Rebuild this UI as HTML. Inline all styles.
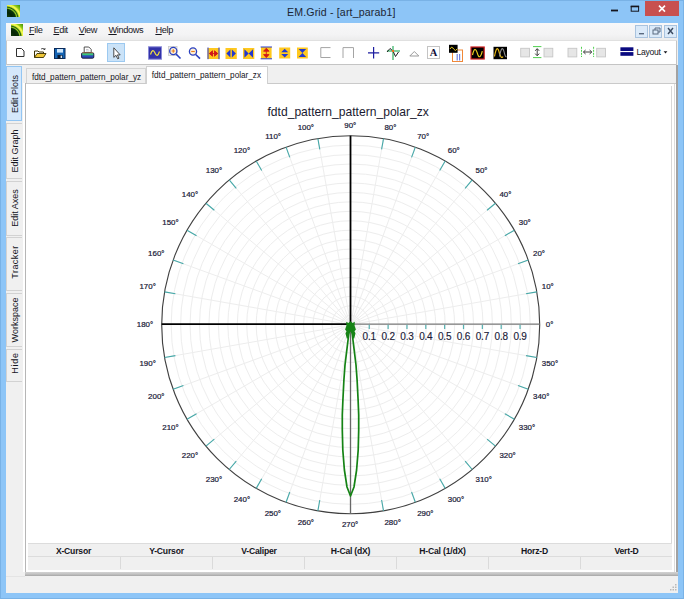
<!DOCTYPE html>
<html><head><meta charset="utf-8"><title>EM.Grid - [art_parab1]</title>
<style>
html,body{margin:0;padding:0;}
body{width:684px;height:599px;overflow:hidden;background:#8dc5f7;font-family:"Liberation Sans",sans-serif;position:relative;}
.abs{position:absolute;}
#win{position:absolute;left:0;top:0;width:684px;height:599px;background:#8dc5f7;box-sizing:border-box;border:1px solid #79b2e6;}
#title{position:absolute;left:287px;top:5.5px;white-space:nowrap;font-size:10.6px;line-height:13px;color:#1c2634;letter-spacing:0.15px;}
#close{position:absolute;left:645px;top:1px;width:34px;height:15px;background:#c8504f;}
#client{position:absolute;left:6px;top:23px;width:672px;height:570px;background:#f0f0f0;}
#menubar{position:absolute;left:6px;top:23px;width:672px;height:17px;background:linear-gradient(#f8f8f9,#f3f3f4 70%,#ececec);}
.menu{position:absolute;top:25px;font-size:9.2px;line-height:11px;color:#15151d;letter-spacing:-0.35px;white-space:nowrap;}
.mdib{position:absolute;top:24.5px;width:12.5px;height:13px;background:#dbeaf9;border:1px solid #a9c3de;box-sizing:border-box;}
#toolbar{position:absolute;left:6px;top:40px;width:670.5px;height:24.5px;background:#fff;border:1px solid #c4c4c4;border-top-color:#e0e0e0;border-left-color:#c8c8c8;border-radius:1px;box-sizing:border-box;}
#sel{position:absolute;left:107.3px;top:43.3px;width:17.5px;height:18.5px;background:#cbe3f8;border:1px solid #9cc9f0;box-sizing:border-box;}
.vtab{position:absolute;left:6.4px;width:16px;background:#f0f0f0;border:1px solid #d2d2d2;border-right:none;box-sizing:border-box;}
.vtab span{position:absolute;left:50%;top:50%;transform:translate(-50%,-50%) rotate(-90deg);white-space:nowrap;font-size:9px;line-height:10px;color:#15151d;margin-left:0.5px;}
.tab{position:absolute;font-size:8.2px;line-height:10px;color:#15151d;box-sizing:border-box;white-space:nowrap;}
#tab1{left:26.3px;top:68px;width:120px;height:15px;background:#f0f0f0;border:1px solid #d4d4d4;border-bottom:none;padding:4.1px 0 0 4.6px;}
#tab2{left:145.6px;top:66px;width:122.4px;height:18px;background:#fff;border:1px solid #d0d0d0;border-bottom:none;padding:3.7px 0 0 5.2px;}
#tbl{position:absolute;left:28px;top:543px;width:644px;height:27px;background:#f0f0f0;border-top:1px solid #dcdcdc;box-sizing:border-box;}
.th{position:absolute;top:545px;height:12px;width:92px;text-align:center;font-size:8.6px;font-weight:bold;color:#15151d;line-height:12px;letter-spacing:-0.2px;}
.cd{position:absolute;top:557px;width:1px;height:12px;background:#dadada;}
svg{position:absolute;left:0;top:0;}
text{font-family:"Liberation Sans",sans-serif;}
</style></head><body>
<div id="win"></div>
<div id="title">EM.Grid - [art_parab1]</div>
<div id="close"></div>
<div id="client"></div>
<div id="menubar"></div>
<div class="menu" style="left:29px"><u>F</u>ile</div>
<div class="menu" style="left:53.4px"><u>E</u>dit</div>
<div class="menu" style="left:78.8px"><u>V</u>iew</div>
<div class="menu" style="left:108.4px"><u>W</u>indows</div>
<div class="menu" style="left:155.4px"><u>H</u>elp</div>
<div class="mdib" style="left:635px"></div>
<div class="mdib" style="left:649.4px"></div>
<div class="mdib" style="left:664px"></div>
<div id="toolbar"></div>
<div id="sel"></div>
<!-- panel frame -->
<div class="abs" style="left:23px;top:82.7px;width:653.4px;height:489.3px;background:#fff"></div>
<div class="abs" style="left:25px;top:83px;width:1.3px;height:491px;background:#b6b6b6"></div>
<div class="abs" style="left:26.3px;top:82.7px;width:650px;height:0.9px;background:#cacaca"></div>
<div class="abs" style="left:673.7px;top:84px;width:1.6px;height:488px;background:#dcdcdc"></div>
<div class="abs" style="left:676.3px;top:65px;width:1.4px;height:510.5px;background:#a2a2a2"></div>
<div class="abs" style="left:24.8px;top:572px;width:653px;height:3.7px;background:linear-gradient(#d2d2d2,#c4c4c4 50%,#a6a6a6)"></div>
<div class="abs" style="left:6px;top:575.7px;width:19px;height:1px;background:#e4e4e4"></div>
<div class="abs" style="left:671px;top:86px;width:1px;height:457px;background:#d8d8d8"></div>
<div class="tab" id="tab1">fdtd_pattern_pattern_polar_yz</div>
<div class="tab" id="tab2">fdtd_pattern_pattern_polar_zx</div>
<div class="vtab" style="top:65.7px;height:55.8px;background:#d5e8fb;border-color:#93c6f3;border-right:1px solid #93c6f3"><span>Edit Plots</span></div>
<div class="vtab" style="top:123px;height:56px;"><span>Edit Graph</span></div>
<div class="vtab" style="top:180.5px;height:55px;"><span>Edit Axes</span></div>
<div class="vtab" style="top:236.6px;height:54px;"><span style="letter-spacing:0.45px;margin-top:-1.5px">Tracker</span></div>
<div class="vtab" style="top:292.6px;height:54.5px;"><span>Workspace</span></div>
<div class="vtab" style="top:349px;height:33px;"><span style="letter-spacing:0.8px;margin-top:-2.5px">Hide</span></div>
<div id="tbl"></div>
<div class="abs" style="left:28px;top:556px;width:644px;height:1px;background:#dcdcdc"></div>
<div class="th" style="left:27.5px">X-Cursor</div>
<div class="th" style="left:120.5px">Y-Cursor</div>
<div class="th" style="left:213px">V-Caliper</div>
<div class="th" style="left:304.5px">H-Cal (dX)</div>
<div class="th" style="left:396.5px">H-Cal (1/dX)</div>
<div class="th" style="left:488.5px">Horz-D</div>
<div class="th" style="left:580.5px">Vert-D</div>
<div class="cd" style="left:119.5px"></div><div class="cd" style="left:211.6px"></div><div class="cd" style="left:303.8px"></div><div class="cd" style="left:396px"></div><div class="cd" style="left:488px"></div><div class="cd" style="left:580px"></div>
<svg width="684" height="599" viewBox="0 0 684 599">
<circle cx="350.7" cy="324.7" r="9.45" fill="none" stroke="#ededed" stroke-width="1"/>
<circle cx="350.7" cy="324.7" r="18.90" fill="none" stroke="#ededed" stroke-width="1"/>
<circle cx="350.7" cy="324.7" r="28.35" fill="none" stroke="#ededed" stroke-width="1"/>
<circle cx="350.7" cy="324.7" r="37.80" fill="none" stroke="#ededed" stroke-width="1"/>
<circle cx="350.7" cy="324.7" r="47.25" fill="none" stroke="#ededed" stroke-width="1"/>
<circle cx="350.7" cy="324.7" r="56.70" fill="none" stroke="#ededed" stroke-width="1"/>
<circle cx="350.7" cy="324.7" r="66.15" fill="none" stroke="#ededed" stroke-width="1"/>
<circle cx="350.7" cy="324.7" r="75.60" fill="none" stroke="#ededed" stroke-width="1"/>
<circle cx="350.7" cy="324.7" r="85.05" fill="none" stroke="#ededed" stroke-width="1"/>
<circle cx="350.7" cy="324.7" r="94.50" fill="none" stroke="#ededed" stroke-width="1"/>
<circle cx="350.7" cy="324.7" r="103.95" fill="none" stroke="#ededed" stroke-width="1"/>
<circle cx="350.7" cy="324.7" r="113.40" fill="none" stroke="#ededed" stroke-width="1"/>
<circle cx="350.7" cy="324.7" r="122.85" fill="none" stroke="#ededed" stroke-width="1"/>
<circle cx="350.7" cy="324.7" r="132.30" fill="none" stroke="#ededed" stroke-width="1"/>
<circle cx="350.7" cy="324.7" r="141.75" fill="none" stroke="#ededed" stroke-width="1"/>
<circle cx="350.7" cy="324.7" r="151.20" fill="none" stroke="#ededed" stroke-width="1"/>
<circle cx="350.7" cy="324.7" r="160.65" fill="none" stroke="#ededed" stroke-width="1"/>
<circle cx="350.7" cy="324.7" r="170.10" fill="none" stroke="#ededed" stroke-width="1"/>
<circle cx="350.7" cy="324.7" r="179.55" fill="none" stroke="#ededed" stroke-width="1"/>
<line x1="350.7" y1="324.7" x2="539.70" y2="324.70" stroke="#ededed" stroke-width="1"/>
<line x1="350.7" y1="324.7" x2="536.83" y2="291.88" stroke="#ededed" stroke-width="1"/>
<line x1="350.7" y1="324.7" x2="528.30" y2="260.06" stroke="#ededed" stroke-width="1"/>
<line x1="350.7" y1="324.7" x2="514.38" y2="230.20" stroke="#ededed" stroke-width="1"/>
<line x1="350.7" y1="324.7" x2="495.48" y2="203.21" stroke="#ededed" stroke-width="1"/>
<line x1="350.7" y1="324.7" x2="472.19" y2="179.92" stroke="#ededed" stroke-width="1"/>
<line x1="350.7" y1="324.7" x2="445.20" y2="161.02" stroke="#ededed" stroke-width="1"/>
<line x1="350.7" y1="324.7" x2="415.34" y2="147.10" stroke="#ededed" stroke-width="1"/>
<line x1="350.7" y1="324.7" x2="383.52" y2="138.57" stroke="#ededed" stroke-width="1"/>
<line x1="350.7" y1="324.7" x2="350.70" y2="135.70" stroke="#ededed" stroke-width="1"/>
<line x1="350.7" y1="324.7" x2="317.88" y2="138.57" stroke="#ededed" stroke-width="1"/>
<line x1="350.7" y1="324.7" x2="286.06" y2="147.10" stroke="#ededed" stroke-width="1"/>
<line x1="350.7" y1="324.7" x2="256.20" y2="161.02" stroke="#ededed" stroke-width="1"/>
<line x1="350.7" y1="324.7" x2="229.21" y2="179.92" stroke="#ededed" stroke-width="1"/>
<line x1="350.7" y1="324.7" x2="205.92" y2="203.21" stroke="#ededed" stroke-width="1"/>
<line x1="350.7" y1="324.7" x2="187.02" y2="230.20" stroke="#ededed" stroke-width="1"/>
<line x1="350.7" y1="324.7" x2="173.10" y2="260.06" stroke="#ededed" stroke-width="1"/>
<line x1="350.7" y1="324.7" x2="164.57" y2="291.88" stroke="#ededed" stroke-width="1"/>
<line x1="350.7" y1="324.7" x2="161.70" y2="324.70" stroke="#ededed" stroke-width="1"/>
<line x1="350.7" y1="324.7" x2="164.57" y2="357.52" stroke="#ededed" stroke-width="1"/>
<line x1="350.7" y1="324.7" x2="173.10" y2="389.34" stroke="#ededed" stroke-width="1"/>
<line x1="350.7" y1="324.7" x2="187.02" y2="419.20" stroke="#ededed" stroke-width="1"/>
<line x1="350.7" y1="324.7" x2="205.92" y2="446.19" stroke="#ededed" stroke-width="1"/>
<line x1="350.7" y1="324.7" x2="229.21" y2="469.48" stroke="#ededed" stroke-width="1"/>
<line x1="350.7" y1="324.7" x2="256.20" y2="488.38" stroke="#ededed" stroke-width="1"/>
<line x1="350.7" y1="324.7" x2="286.06" y2="502.30" stroke="#ededed" stroke-width="1"/>
<line x1="350.7" y1="324.7" x2="317.88" y2="510.83" stroke="#ededed" stroke-width="1"/>
<line x1="350.7" y1="324.7" x2="350.70" y2="513.70" stroke="#ededed" stroke-width="1"/>
<line x1="350.7" y1="324.7" x2="383.52" y2="510.83" stroke="#ededed" stroke-width="1"/>
<line x1="350.7" y1="324.7" x2="415.34" y2="502.30" stroke="#ededed" stroke-width="1"/>
<line x1="350.7" y1="324.7" x2="445.20" y2="488.38" stroke="#ededed" stroke-width="1"/>
<line x1="350.7" y1="324.7" x2="472.19" y2="469.48" stroke="#ededed" stroke-width="1"/>
<line x1="350.7" y1="324.7" x2="495.48" y2="446.19" stroke="#ededed" stroke-width="1"/>
<line x1="350.7" y1="324.7" x2="514.38" y2="419.20" stroke="#ededed" stroke-width="1"/>
<line x1="350.7" y1="324.7" x2="528.30" y2="389.34" stroke="#ededed" stroke-width="1"/>
<line x1="350.7" y1="324.7" x2="536.83" y2="357.52" stroke="#ededed" stroke-width="1"/>
<circle cx="350.7" cy="324.7" r="189.0" fill="none" stroke="#404040" stroke-width="1.15"/>
<line x1="536.83" y1="291.88" x2="526.00" y2="293.79" stroke="#45a8a8" stroke-width="1.1"/>
<line x1="528.30" y1="260.06" x2="517.97" y2="263.82" stroke="#45a8a8" stroke-width="1.1"/>
<line x1="514.38" y1="230.20" x2="504.85" y2="235.70" stroke="#45a8a8" stroke-width="1.1"/>
<line x1="495.48" y1="203.21" x2="487.06" y2="210.28" stroke="#45a8a8" stroke-width="1.1"/>
<line x1="472.19" y1="179.92" x2="465.12" y2="188.34" stroke="#45a8a8" stroke-width="1.1"/>
<line x1="445.20" y1="161.02" x2="439.70" y2="170.55" stroke="#45a8a8" stroke-width="1.1"/>
<line x1="415.34" y1="147.10" x2="411.58" y2="157.43" stroke="#45a8a8" stroke-width="1.1"/>
<line x1="383.52" y1="138.57" x2="381.61" y2="149.40" stroke="#45a8a8" stroke-width="1.1"/>
<line x1="317.88" y1="138.57" x2="319.79" y2="149.40" stroke="#45a8a8" stroke-width="1.1"/>
<line x1="286.06" y1="147.10" x2="289.82" y2="157.43" stroke="#45a8a8" stroke-width="1.1"/>
<line x1="256.20" y1="161.02" x2="261.70" y2="170.55" stroke="#45a8a8" stroke-width="1.1"/>
<line x1="229.21" y1="179.92" x2="236.28" y2="188.34" stroke="#45a8a8" stroke-width="1.1"/>
<line x1="205.92" y1="203.21" x2="214.34" y2="210.28" stroke="#45a8a8" stroke-width="1.1"/>
<line x1="187.02" y1="230.20" x2="196.55" y2="235.70" stroke="#45a8a8" stroke-width="1.1"/>
<line x1="173.10" y1="260.06" x2="183.43" y2="263.82" stroke="#45a8a8" stroke-width="1.1"/>
<line x1="164.57" y1="291.88" x2="175.40" y2="293.79" stroke="#45a8a8" stroke-width="1.1"/>
<line x1="164.57" y1="357.52" x2="175.40" y2="355.61" stroke="#45a8a8" stroke-width="1.1"/>
<line x1="173.10" y1="389.34" x2="183.43" y2="385.58" stroke="#45a8a8" stroke-width="1.1"/>
<line x1="187.02" y1="419.20" x2="196.55" y2="413.70" stroke="#45a8a8" stroke-width="1.1"/>
<line x1="205.92" y1="446.19" x2="214.34" y2="439.12" stroke="#45a8a8" stroke-width="1.1"/>
<line x1="229.21" y1="469.48" x2="236.28" y2="461.06" stroke="#45a8a8" stroke-width="1.1"/>
<line x1="256.20" y1="488.38" x2="261.70" y2="478.85" stroke="#45a8a8" stroke-width="1.1"/>
<line x1="286.06" y1="502.30" x2="289.82" y2="491.97" stroke="#45a8a8" stroke-width="1.1"/>
<line x1="317.88" y1="510.83" x2="319.79" y2="500.00" stroke="#45a8a8" stroke-width="1.1"/>
<line x1="383.52" y1="510.83" x2="381.61" y2="500.00" stroke="#45a8a8" stroke-width="1.1"/>
<line x1="415.34" y1="502.30" x2="411.58" y2="491.97" stroke="#45a8a8" stroke-width="1.1"/>
<line x1="445.20" y1="488.38" x2="439.70" y2="478.85" stroke="#45a8a8" stroke-width="1.1"/>
<line x1="472.19" y1="469.48" x2="465.12" y2="461.06" stroke="#45a8a8" stroke-width="1.1"/>
<line x1="495.48" y1="446.19" x2="487.06" y2="439.12" stroke="#45a8a8" stroke-width="1.1"/>
<line x1="514.38" y1="419.20" x2="504.85" y2="413.70" stroke="#45a8a8" stroke-width="1.1"/>
<line x1="528.30" y1="389.34" x2="517.97" y2="385.58" stroke="#45a8a8" stroke-width="1.1"/>
<line x1="536.83" y1="357.52" x2="526.00" y2="355.61" stroke="#45a8a8" stroke-width="1.1"/>
<line x1="350.5" y1="324.1" x2="539.7" y2="324.1" stroke="#7a7a7a" stroke-width="1.4"/>
<line x1="350.5" y1="324.1" x2="350.5" y2="513.7" stroke="#686868" stroke-width="1.3"/>
<line x1="161.7" y1="324.1" x2="351.4" y2="324.1" stroke="#000" stroke-width="1.8"/>
<line x1="350.5" y1="135.7" x2="350.5" y2="325.0" stroke="#000" stroke-width="1.8"/>
<line x1="369.25" y1="324.70000000000005" x2="369.25" y2="329.1" stroke="#55b0b0" stroke-width="1.2"/>
<text x="369.25" y="339.9" text-anchor="middle" font-size="10" fill="#1a1a38" stroke="#1a1a38" stroke-width="0.15" letter-spacing="-0.2">0.1</text>
<line x1="388.10" y1="324.70000000000005" x2="388.10" y2="329.1" stroke="#55b0b0" stroke-width="1.2"/>
<text x="388.10" y="339.9" text-anchor="middle" font-size="10" fill="#1a1a38" stroke="#1a1a38" stroke-width="0.15" letter-spacing="-0.2">0.2</text>
<line x1="406.95" y1="324.70000000000005" x2="406.95" y2="329.1" stroke="#55b0b0" stroke-width="1.2"/>
<text x="406.95" y="339.9" text-anchor="middle" font-size="10" fill="#1a1a38" stroke="#1a1a38" stroke-width="0.15" letter-spacing="-0.2">0.3</text>
<line x1="425.80" y1="324.70000000000005" x2="425.80" y2="329.1" stroke="#55b0b0" stroke-width="1.2"/>
<text x="425.80" y="339.9" text-anchor="middle" font-size="10" fill="#1a1a38" stroke="#1a1a38" stroke-width="0.15" letter-spacing="-0.2">0.4</text>
<line x1="444.65" y1="324.70000000000005" x2="444.65" y2="329.1" stroke="#55b0b0" stroke-width="1.2"/>
<text x="444.65" y="339.9" text-anchor="middle" font-size="10" fill="#1a1a38" stroke="#1a1a38" stroke-width="0.15" letter-spacing="-0.2">0.5</text>
<line x1="463.50" y1="324.70000000000005" x2="463.50" y2="329.1" stroke="#55b0b0" stroke-width="1.2"/>
<text x="463.50" y="339.9" text-anchor="middle" font-size="10" fill="#1a1a38" stroke="#1a1a38" stroke-width="0.15" letter-spacing="-0.2">0.6</text>
<line x1="482.35" y1="324.70000000000005" x2="482.35" y2="329.1" stroke="#55b0b0" stroke-width="1.2"/>
<text x="482.35" y="339.9" text-anchor="middle" font-size="10" fill="#1a1a38" stroke="#1a1a38" stroke-width="0.15" letter-spacing="-0.2">0.7</text>
<line x1="501.20" y1="324.70000000000005" x2="501.20" y2="329.1" stroke="#55b0b0" stroke-width="1.2"/>
<text x="501.20" y="339.9" text-anchor="middle" font-size="10" fill="#1a1a38" stroke="#1a1a38" stroke-width="0.15" letter-spacing="-0.2">0.8</text>
<line x1="520.05" y1="324.70000000000005" x2="520.05" y2="329.1" stroke="#55b0b0" stroke-width="1.2"/>
<text x="520.05" y="339.9" text-anchor="middle" font-size="10" fill="#1a1a38" stroke="#1a1a38" stroke-width="0.15" letter-spacing="-0.2">0.9</text>
<text x="545.80" y="327.20" text-anchor="start" font-size="7.9" fill="#1a1a38" stroke="#1a1a38" stroke-width="0.22">0°</text>
<text x="541.85" y="288.80" text-anchor="start" font-size="7.9" fill="#1a1a38" stroke="#1a1a38" stroke-width="0.22">10°</text>
<text x="533.10" y="255.77" text-anchor="start" font-size="7.9" fill="#1a1a38" stroke="#1a1a38" stroke-width="0.22">20°</text>
<text x="518.81" y="224.81" text-anchor="start" font-size="7.9" fill="#1a1a38" stroke="#1a1a38" stroke-width="0.22">30°</text>
<text x="499.41" y="196.87" text-anchor="start" font-size="7.9" fill="#1a1a38" stroke="#1a1a38" stroke-width="0.22">40°</text>
<text x="475.50" y="172.80" text-anchor="start" font-size="7.9" fill="#1a1a38" stroke="#1a1a38" stroke-width="0.22">50°</text>
<text x="447.80" y="153.33" text-anchor="start" font-size="7.9" fill="#1a1a38" stroke="#1a1a38" stroke-width="0.22">60°</text>
<text x="417.15" y="139.04" text-anchor="start" font-size="7.9" fill="#1a1a38" stroke="#1a1a38" stroke-width="0.22">70°</text>
<text x="384.49" y="130.38" text-anchor="start" font-size="7.9" fill="#1a1a38" stroke="#1a1a38" stroke-width="0.22">80°</text>
<text x="350.30" y="127.60" text-anchor="middle" font-size="7.9" fill="#1a1a38" stroke="#1a1a38" stroke-width="0.22">90°</text>
<text x="314.00" y="130.38" text-anchor="end" font-size="7.9" fill="#1a1a38" stroke="#1a1a38" stroke-width="0.22">100°</text>
<text x="280.98" y="139.04" text-anchor="end" font-size="7.9" fill="#1a1a38" stroke="#1a1a38" stroke-width="0.22">110°</text>
<text x="250.05" y="153.33" text-anchor="end" font-size="7.9" fill="#1a1a38" stroke="#1a1a38" stroke-width="0.22">120°</text>
<text x="222.14" y="172.80" text-anchor="end" font-size="7.9" fill="#1a1a38" stroke="#1a1a38" stroke-width="0.22">130°</text>
<text x="198.11" y="196.87" text-anchor="end" font-size="7.9" fill="#1a1a38" stroke="#1a1a38" stroke-width="0.22">140°</text>
<text x="178.68" y="224.81" text-anchor="end" font-size="7.9" fill="#1a1a38" stroke="#1a1a38" stroke-width="0.22">150°</text>
<text x="164.44" y="255.77" text-anchor="end" font-size="7.9" fill="#1a1a38" stroke="#1a1a38" stroke-width="0.22">160°</text>
<text x="155.82" y="288.80" text-anchor="end" font-size="7.9" fill="#1a1a38" stroke="#1a1a38" stroke-width="0.22">170°</text>
<text x="153.10" y="327.20" text-anchor="end" font-size="7.9" fill="#1a1a38" stroke="#1a1a38" stroke-width="0.22">180°</text>
<text x="155.82" y="366.01" text-anchor="end" font-size="7.9" fill="#1a1a38" stroke="#1a1a38" stroke-width="0.22">190°</text>
<text x="164.44" y="399.05" text-anchor="end" font-size="7.9" fill="#1a1a38" stroke="#1a1a38" stroke-width="0.22">200°</text>
<text x="178.68" y="430.02" text-anchor="end" font-size="7.9" fill="#1a1a38" stroke="#1a1a38" stroke-width="0.22">210°</text>
<text x="198.11" y="457.97" text-anchor="end" font-size="7.9" fill="#1a1a38" stroke="#1a1a38" stroke-width="0.22">220°</text>
<text x="222.14" y="482.07" text-anchor="end" font-size="7.9" fill="#1a1a38" stroke="#1a1a38" stroke-width="0.22">230°</text>
<text x="250.05" y="501.57" text-anchor="end" font-size="7.9" fill="#1a1a38" stroke="#1a1a38" stroke-width="0.22">240°</text>
<text x="280.98" y="515.89" text-anchor="end" font-size="7.9" fill="#1a1a38" stroke="#1a1a38" stroke-width="0.22">250°</text>
<text x="314.00" y="524.59" text-anchor="end" font-size="7.9" fill="#1a1a38" stroke="#1a1a38" stroke-width="0.22">260°</text>
<text x="350.10" y="527.40" text-anchor="middle" font-size="7.9" fill="#1a1a38" stroke="#1a1a38" stroke-width="0.22">270°</text>
<text x="384.49" y="524.59" text-anchor="start" font-size="7.9" fill="#1a1a38" stroke="#1a1a38" stroke-width="0.22">280°</text>
<text x="417.15" y="515.89" text-anchor="start" font-size="7.9" fill="#1a1a38" stroke="#1a1a38" stroke-width="0.22">290°</text>
<text x="447.80" y="501.57" text-anchor="start" font-size="7.9" fill="#1a1a38" stroke="#1a1a38" stroke-width="0.22">300°</text>
<text x="475.50" y="482.07" text-anchor="start" font-size="7.9" fill="#1a1a38" stroke="#1a1a38" stroke-width="0.22">310°</text>
<text x="499.41" y="457.97" text-anchor="start" font-size="7.9" fill="#1a1a38" stroke="#1a1a38" stroke-width="0.22">320°</text>
<text x="518.81" y="430.02" text-anchor="start" font-size="7.9" fill="#1a1a38" stroke="#1a1a38" stroke-width="0.22">330°</text>
<text x="533.10" y="399.05" text-anchor="start" font-size="7.9" fill="#1a1a38" stroke="#1a1a38" stroke-width="0.22">340°</text>
<text x="541.85" y="366.01" text-anchor="start" font-size="7.9" fill="#1a1a38" stroke="#1a1a38" stroke-width="0.22">350°</text>
<polyline fill="none" stroke="#158315" stroke-width="1.7" stroke-linejoin="round" points="349.0,332.0 347.2,347.0 345.0,365.0 343.9,380.0 342.9,400.0 342.3,415.0 342.3,430.0 342.8,450.0 344.4,470.0 347.0,487.0 350.5,496.0 354.0,487.0 356.6,470.0 358.2,450.0 358.7,430.0 358.7,415.0 358.1,400.0 357.1,380.0 356.0,365.0 353.8,347.0 352.0,332.0"/>
<path fill="#158315" d="M346.2 321.8 L348.4 322.9 L350.5 321.3 L352.6 322.9 L354.8 321.8 L354.6 325.8 L355.9 329.4 L354.5 331.2 L355.5 333.5 L354.2 338.5 L352.5 338.5 L352 334 L350.5 331.5 L349 334 L348.5 338.5 L346.8 338.5 L345.5 333.5 L346.5 331.2 L345.1 329.4 L346.4 325.8 Z"/>
<text x="348.2" y="116.3" text-anchor="middle" font-size="12.1" fill="#1a1a30">fdtd_pattern_pattern_polar_zx</text>
<!-- app icons -->
<defs>
<radialGradient id="lg" cx="-0.1" cy="1.1" r="1.6" fx="-0.1" fy="1.1" gradientUnits="objectBoundingBox"><stop offset="0" stop-color="#1a4a10"/><stop offset="0.3" stop-color="#052405"/><stop offset="0.47" stop-color="#0a340a"/><stop offset="0.53" stop-color="#9ccc28"/><stop offset="0.58" stop-color="#1c5c0c"/><stop offset="0.65" stop-color="#e8f440"/><stop offset="0.71" stop-color="#f4fa58"/><stop offset="0.78" stop-color="#98cc18"/><stop offset="0.9" stop-color="#58a410"/><stop offset="1" stop-color="#3c8c0c"/></radialGradient>
</defs>
<rect x="7" y="5" width="13" height="12" fill="url(#lg)"/>
<rect x="11" y="24" width="12" height="12" fill="url(#lg)"/>
<!-- window controls -->
<rect x="611" y="9.6" width="7" height="1.8" fill="#15151d"/>
<rect x="631.2" y="6.6" width="7.4" height="4.6" fill="none" stroke="#15151d" stroke-width="1"/>
<rect x="630.7" y="5.6" width="8.4" height="1.6" fill="#15151d"/>
<path d="M659 5.6 L665 11.6 M665 5.6 L659 11.6" stroke="#fff" stroke-width="1.6" fill="none"/>
<!-- mdi -->
<rect x="639" y="33" width="5" height="1.4" fill="#5a6a80"/>
<rect x="653" y="30" width="5" height="4" fill="none" stroke="#5a6a80" stroke-width="1"/>
<path d="M655 30 V28 H660 V32 H658" fill="none" stroke="#5a6a80" stroke-width="1"/>
<path d="M668 28 L673 34 M673 28 L668 34" stroke="#3a4a60" stroke-width="1.4" fill="none"/>
<!-- toolbar icons -->
<!-- new -->
<path d="M16.5 48.5 H21.5 L24 51 V56.5 H16.5 Z" fill="#fff" stroke="#303030" stroke-width="1"/>
<!-- open -->
<path d="M34.5 57.5 V51 H38 L39 52 H43.5 V53.5" fill="none" stroke="#3a3000" stroke-width="1"/>
<path d="M34.5 57.5 L37 53.5 H46 L43.5 57.5 Z" fill="#f0c838" stroke="#3a3000" stroke-width="0.9"/>
<path d="M41 49 q2 -1.5 4 0.5 l0 -1.5 m0 1.5 l-1.5 0" fill="none" stroke="#303030" stroke-width="0.8"/>
<!-- save -->
<rect x="54.5" y="48.5" width="10.5" height="10" fill="#1464b4" stroke="#0a2a5a" stroke-width="1"/>
<rect x="57" y="49" width="6" height="3.6" fill="#cfe6fa"/>
<rect x="57.5" y="55" width="5" height="3.5" fill="#0a1a30"/>
<rect x="60.6" y="55.6" width="1.4" height="2.4" fill="#e0e8f0"/>
<!-- print -->
<path d="M84.2 52.6 V47 H88.8 L91.2 49.4 V52.6 Z" fill="#fff" stroke="#404040" stroke-width="0.9"/>
<path d="M86 49.5 H88.5 M86 51 H89.5" stroke="#b0b0b8" stroke-width="0.7"/>
<rect x="81.6" y="52.8" width="12.2" height="5.4" rx="1.2" fill="#2c48b8" stroke="#101030" stroke-width="0.9"/>
<rect x="82.2" y="53.3" width="11" height="2" fill="#38c878"/>
<rect x="82.2" y="52.6" width="11" height="0.6" fill="#f0a040"/>
<!-- pointer -->
<path d="M113.8 47.8 V57.4 L116 55.3 L117.7 58.8 L119 58.2 L117.4 54.9 H120.2 Z" fill="#fff" stroke="#383838" stroke-width="0.9"/>
<!-- wave icon blue -->
<rect x="148.5" y="46.8" width="13" height="12.4" fill="#3232a8" stroke="#8a8ad8" stroke-width="1"/>
<path d="M150.5 54.5 q2.2 -7 4.5 -1.5 q2.2 5.5 4.5 -1.5" fill="none" stroke="#f0e040" stroke-width="1.2"/>
<!-- zoom in -->
<rect x="168.5" y="46.5" width="8.5" height="9" fill="#f0f0f0" stroke="#c8c8c8" stroke-width="0.8"/>
<circle cx="173.3" cy="51" r="3.6" fill="#fdf0d8" stroke="#2a40c0" stroke-width="1.3"/>
<path d="M171.5 51 H175.1 M173.3 49.2 V52.8" stroke="#e88020" stroke-width="1.1"/>
<path d="M176 54 L180.5 58.5" stroke="#2a40c0" stroke-width="1.6"/>
<!-- zoom out -->
<circle cx="193" cy="51.5" r="3.6" fill="#fdf0d8" stroke="#2a40c0" stroke-width="1.3"/>
<path d="M191.2 51.5 H194.8" stroke="#e88020" stroke-width="1.1"/>
<path d="M195.7 54.5 L200 58.6" stroke="#2a40c0" stroke-width="1.6"/>
<!-- yellow icons -->
<rect x="207.5" y="48" width="12" height="11" fill="#ffc81e"/>
<path d="M208 47.5 V59.2 M219 47.5 V59.2" stroke="#2a3ad0" stroke-width="1"/>
<path d="M209.3 53.5 L212.5 50.8 V56.2 Z M217.7 53.5 L214.5 50.8 V56.2 Z M212 53.5 H215" fill="#d01818" stroke="#d01818" stroke-width="0.9"/>
<rect x="225.5" y="48" width="11.3" height="11" fill="#ffc81e"/>
<path d="M226.4 53.5 L230.4 49.4 V57.6 Z M235.9 53.5 L231.9 49.4 V57.6 Z" fill="#2238d0"/>
<rect x="243" y="48" width="11.3" height="11" fill="#ffc81e"/>
<path d="M244.4 49.2 L248.7 53.5 L244.4 57.8 Z M253 49.2 L248.7 53.5 L253 57.8 Z" fill="#2238d0"/>
<rect x="261" y="47" width="10.6" height="11.8" fill="#ffc81e"/>
<path d="M260.6 47 H272 M260.6 58.8 H272" stroke="#2a3ad0" stroke-width="1"/>
<path d="M266.3 48.2 L263.6 51.2 H269 Z M266.3 57.6 L263.6 54.6 H269 Z M266.3 51 V55" fill="#d01818" stroke="#d01818" stroke-width="0.9"/>
<rect x="279.2" y="47.5" width="11" height="11" fill="#ffc81e"/>
<path d="M284.7 48.8 L281.2 52.3 H288.2 Z M284.7 57.4 L281.2 53.9 H288.2 Z" fill="#2238d0"/>
<rect x="297" y="47.5" width="10.8" height="11" fill="#ffc81e"/>
<path d="M298.6 49 H306.2 L302.4 53 Z M298.6 57 H306.2 L302.4 53 Z" fill="#2238d0"/>
<!-- gray brackets -->
<path d="M330.5 47.6 H320.8 V57.5 H330.5" fill="none" stroke="#a4a4a4" stroke-width="1"/>
<path d="M343 58 V47.6 H353.5 V58" fill="none" stroke="#a4a4a4" stroke-width="1"/>
<!-- plus -->
<path d="M368 52.8 H379.2 M373.6 47 V58.6" stroke="#1c1ca0" stroke-width="1.2"/>
<!-- crosshair wave -->
<path d="M393 46 V60 M387 51 H400" stroke="#58c080" stroke-width="1.5"/>
<path d="M387 52 L390 48.5 L393 51 L395.5 56.5 L398.5 52" fill="none" stroke="#202020" stroke-width="1"/>
<rect x="392" y="50" width="2" height="2" fill="#f07020"/>
<!-- triangle -->
<path d="M409.8 56 L414.3 51.5 L418.8 56 Z" fill="none" stroke="#909090" stroke-width="0.9"/>
<!-- A -->
<rect x="427.5" y="46.5" width="12" height="12" fill="#fff" stroke="#c4c4c4" stroke-width="1"/>
<text x="433.5" y="56.3" text-anchor="middle" font-size="10.5" font-weight="bold" style="font-family:'Liberation Serif',serif" fill="#10103a">A</text>
<!-- black+orange -->
<rect x="452.5" y="50" width="10" height="11.5" fill="#fff" stroke="#f08838" stroke-width="1"/>
<rect x="449" y="44.8" width="8.6" height="8" fill="#000"/>
<path d="M450 49 q1.8 -3.5 3.6 0 q1.8 3 3.6 0" fill="none" stroke="#f0d020" stroke-width="1"/>
<path d="M457.2 54 V60.5 M459.6 54 V60.5" stroke="#7080e0" stroke-width="1.2"/>
<!-- red border wave -->
<rect x="471" y="47" width="13.2" height="12" fill="#000" stroke="#d02020" stroke-width="1.2"/>
<path d="M472.5 55 q2.3 -10 4.8 -1.8 q2.4 8 5 -2" fill="none" stroke="#f0d020" stroke-width="1.2"/>
<!-- double wave -->
<rect x="493.5" y="46.8" width="13.5" height="12.4" fill="#000"/>
<path d="M494.5 56.5 q2.5 -14 5 -3 q2 6 3.5 3" fill="none" stroke="#e8b818" stroke-width="1.2"/>
<path d="M499.5 56.5 q2.5 -14 5 -3 q1 4 2 3" fill="none" stroke="#909090" stroke-width="1.1"/>
<!-- gray squares + arrows -->
<rect x="520.7" y="48.3" width="8.8" height="8.6" fill="#e6e6e6" stroke="#c6c6c6" stroke-width="0.9"/>
<rect x="544" y="48.3" width="8.8" height="8.6" fill="#e6e6e6" stroke="#c6c6c6" stroke-width="0.9"/>
<rect x="568" y="48.3" width="8.8" height="8.6" fill="#e6e6e6" stroke="#c6c6c6" stroke-width="0.9"/>
<rect x="596.7" y="48.3" width="8.8" height="8.6" fill="#e6e6e6" stroke="#c6c6c6" stroke-width="0.9"/>
<path d="M533 46.6 H541.4 M533 57.6 H541.4" stroke="#50d050" stroke-width="1"/>
<path d="M537.2 49 V55.4 M535.2 50.8 L537.2 48.6 L539.2 50.8 M535.2 53.6 L537.2 55.8 L539.2 53.6" fill="none" stroke="#404040" stroke-width="1"/>
<path d="M581.5 46.8 V57 M593.6 46.8 V57" stroke="#50d050" stroke-width="1" stroke-dasharray="2 1"/>
<path d="M583.6 52 H591.6 M585.6 50 L583.4 52 L585.6 54 M589.6 50 L591.8 52 L589.6 54" fill="none" stroke="#404040" stroke-width="1"/>
<!-- layout -->
<rect x="620.4" y="47.3" width="13" height="3.7" fill="#0a0a80"/>
<rect x="620.4" y="52.1" width="13" height="3.7" fill="#0a0a80"/>
<text x="636.4" y="55.2" font-size="8.6" fill="#15151d" letter-spacing="-0.25">Layout</text>
<path d="M663.6 51.3 H667.4 L665.5 53.6 Z" fill="#15151d"/>
<!-- resize grip -->
<g fill="#b8b8b8"><rect x="675" y="584" width="1.5" height="1.5"/><rect x="672.5" y="586.5" width="1.5" height="1.5"/><rect x="675" y="586.5" width="1.5" height="1.5"/><rect x="670" y="589" width="1.5" height="1.5"/><rect x="672.5" y="589" width="1.5" height="1.5"/><rect x="675" y="589" width="1.5" height="1.5"/></g>

</svg>
</body></html>
